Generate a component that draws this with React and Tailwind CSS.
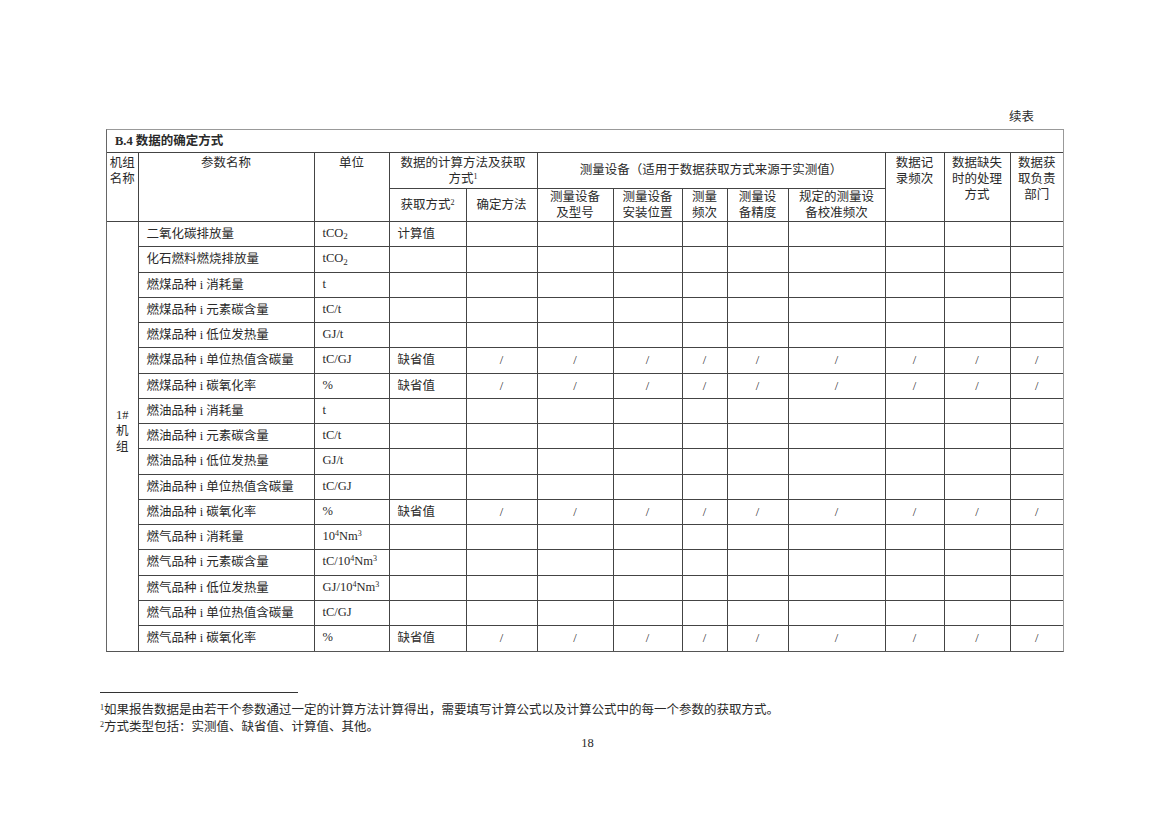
import React from "react";

const colWidths = [31, 176, 75, 77, 71, 76, 69, 45, 61, 97, 59, 66, 53];

const Sup = ({ children }) => <sup className="text-[8px]">{children}</sup>;

const tco2 = (
  <>
    tCO<sub className="text-[9px]">2</sub>
  </>
);
const nm3 = (
  <>
    10<Sup>4</Sup>Nm<Sup>3</Sup>
  </>
);

const rows = [
  { name: "二氧化碳排放量", unit: tco2, method: "计算值" },
  { name: "化石燃料燃烧排放量", unit: tco2 },
  { name: "燃煤品种 i 消耗量", unit: "t" },
  { name: "燃煤品种 i 元素碳含量", unit: "tC/t" },
  { name: "燃煤品种 i 低位发热量", unit: "GJ/t" },
  { name: "燃煤品种 i 单位热值含碳量", unit: "tC/GJ", method: "缺省值", slash: true },
  { name: "燃煤品种 i 碳氧化率", unit: "%", method: "缺省值", slash: true },
  { name: "燃油品种 i 消耗量", unit: "t" },
  { name: "燃油品种 i 元素碳含量", unit: "tC/t" },
  { name: "燃油品种 i 低位发热量", unit: "GJ/t" },
  { name: "燃油品种 i 单位热值含碳量", unit: "tC/GJ" },
  { name: "燃油品种 i 碳氧化率", unit: "%", method: "缺省值", slash: true },
  { name: "燃气品种 i 消耗量", unit: nm3 },
  { name: "燃气品种 i 元素碳含量", unit: <>tC/{nm3}</> },
  { name: "燃气品种 i 低位发热量", unit: <>GJ/{nm3}</> },
  { name: "燃气品种 i 单位热值含碳量", unit: "tC/GJ" },
  { name: "燃气品种 i 碳氧化率", unit: "%", method: "缺省值", slash: true },
];

// cell borders: right + bottom only, the wrapper draws the outside
const line = "border-[#444]";

export default function App() {
  return (
    <div className="w-[1169px] h-[826px] bg-white text-[#2a2a2a] font-['Liberation_Serif','Noto_Sans_CJK_SC',serif] text-[12.5px]">
      <div className="pl-[100px] pt-[109px]">
        <div className="ml-[6px] w-[958px]">
          <div className="h-[16px] leading-[16px] text-right pr-[30px]">续表</div>
          <div className="mt-[4px] border-t border-r border-t-[#999] border-r-[#999] border-l border-b border-l-[#666] border-b-[#555]">
            <table className="w-[956px] table-fixed border-collapse leading-[16px]">
              <colgroup>
                {colWidths.map((w, i) => (
                  <col key={i} style={{ width: w }} />
                ))}
              </colgroup>
              <tbody>
                <tr className="h-[22px]">
                  <td colSpan={13} className={`border-b ${line} pl-[8px] align-middle font-bold`}>
                    B.4 数据的确定方式
                  </td>
                </tr>
                <tr className="h-[36px]">
                  <td rowSpan={2} className={`border-r border-b ${line} align-top pt-[2px] text-center`}>
                    机组<br />名称
                  </td>
                  <td rowSpan={2} className={`border-r border-b ${line} align-top pt-[2px] text-center`}>
                    参数名称
                  </td>
                  <td rowSpan={2} className={`border-r border-b ${line} align-top pt-[2px] text-center`}>
                    单位
                  </td>
                  <td colSpan={2} className={`border-r border-b ${line} align-top pt-[2px] text-center`}>
                    数据的计算方法及获取<br />
                    方式<Sup>1</Sup>
                  </td>
                  <td colSpan={5} className={`border-r border-b ${line} align-middle text-center`}>
                    测量设备（适用于数据获取方式来源于实测值）
                  </td>
                  <td rowSpan={2} className={`border-r border-b ${line} align-top pt-[2px] text-center`}>
                    数据记<br />录频次
                  </td>
                  <td rowSpan={2} className={`border-r border-b ${line} align-top pt-[2px] text-center`}>
                    数据缺失<br />时的处理<br />方式
                  </td>
                  <td rowSpan={2} className={`border-b ${line} align-top pt-[2px] text-center`}>
                    数据获<br />取负责<br />部门
                  </td>
                </tr>
                <tr className="h-[33.5px]">
                  <td className={`border-r border-b ${line} text-center align-middle`}>
                    获取方式<Sup>2</Sup>
                  </td>
                  <td className={`border-r border-b ${line} text-center align-middle`}>确定方法</td>
                  <td className={`border-r border-b ${line} text-center align-middle`}>
                    测量设备<br />及型号
                  </td>
                  <td className={`border-r border-b ${line} text-center align-middle`}>
                    测量设备<br />安装位置
                  </td>
                  <td className={`border-r border-b ${line} text-center align-middle`}>
                    测量<br />频次
                  </td>
                  <td className={`border-r border-b ${line} text-center align-middle`}>
                    测量设<br />备精度
                  </td>
                  <td className={`border-r border-b ${line} text-center align-middle`}>
                    规定的测量设<br />备校准频次
                  </td>
                </tr>
                {rows.map((r, i) => {
                  const last = i === rows.length - 1;
                  const bb = last ? "" : "border-b";
                  return (
                    <tr key={i} className="h-[25.25px]">
                      {i === 0 && (
                        <td rowSpan={rows.length} className={`border-r ${line} text-center align-middle pb-[10px]`}>
                          1#<br />机<br />组
                        </td>
                      )}
                      <td className={`border-r ${bb} ${line} pl-[8px] align-middle`}>{r.name}</td>
                      <td className={`border-r ${bb} ${line} pl-[8px] pt-[3px] align-top`}>{r.unit}</td>
                      <td className={`border-r ${bb} ${line} pl-[8px] align-middle`}>{r.method}</td>
                      {Array.from({ length: 9 }).map((_, j) => (
                        <td
                          key={j}
                          className={`${j < 8 ? "border-r" : ""} ${bb} ${line} text-center align-middle`}
                        >
                          {r.slash ? "/" : ""}
                        </td>
                      ))}
                    </tr>
                  );
                })}
              </tbody>
            </table>
          </div>
        </div>
        <div className="mt-[40px] w-[198px] border-t border-[#333]"></div>
        <div className="mt-[9px] leading-[17px] text-[12.5px]">
          <div>
            <Sup>1</Sup>如果报告数据是由若干个参数通过一定的计算方法计算得出，需要填写计算公式以及计算公式中的每一个参数的获取方式。
          </div>
          <div>
            <Sup>2</Sup>方式类型包括：实测值、缺省值、计算值、其他。
          </div>
        </div>
        <div className="w-[975px] text-center leading-[16px] -mt-[1px]">18</div>
      </div>
    </div>
  );
}
